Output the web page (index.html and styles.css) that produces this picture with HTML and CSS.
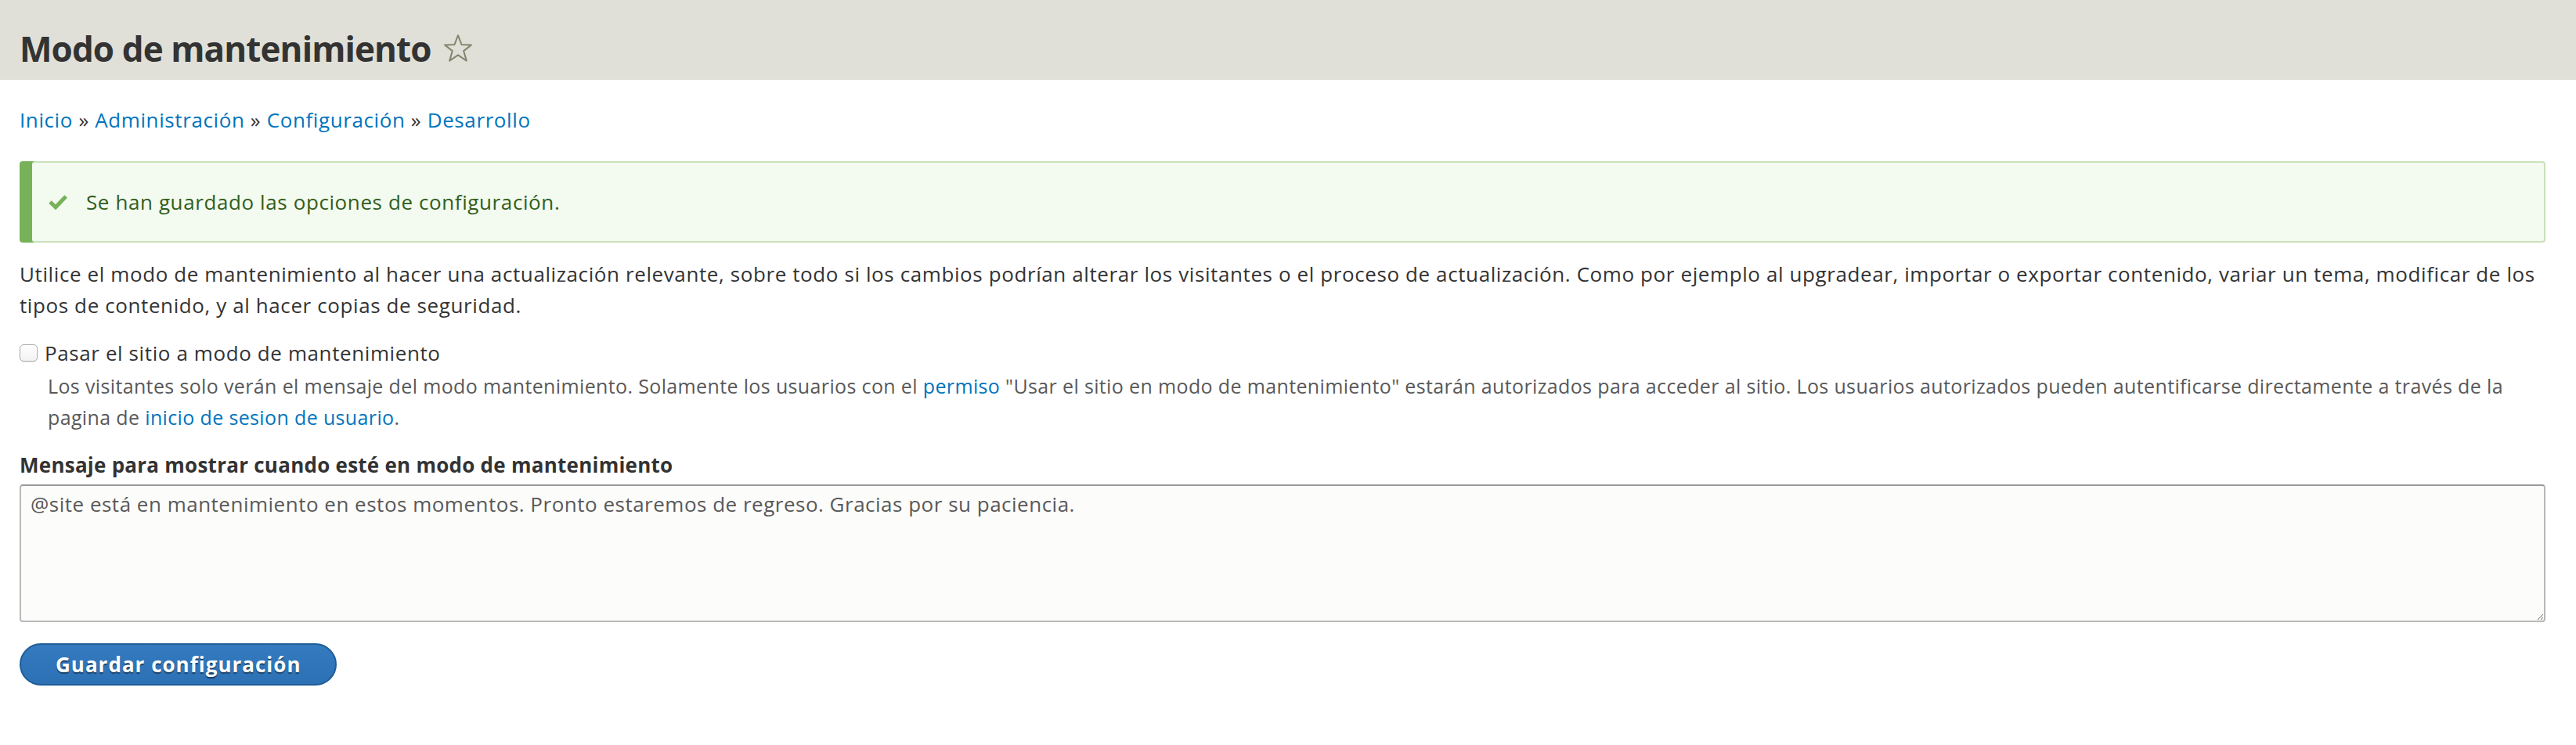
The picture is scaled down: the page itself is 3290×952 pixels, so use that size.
FILE: index.html
```html
<!DOCTYPE html>
<html lang="es">

<head>
	<title>Modo de mantenimiento</title>
	<meta charset="utf-8">
	<meta name="viewport" content="width=device-width, initial-scale=1.0">
	<link rel="stylesheet" href="styles.css">
</head>

<body>

	<header class="page-header">
		<h1 class="page-title">Modo de mantenimiento
			<a href="#" class="shortcut" title="Añadir a los atajos"><svg class="star" viewBox="0 0 36 36" width="36" height="36">
				<path d="M18 1.2 L22.6 13.1 L35 13.4 L25.2 21.1 L28.8 33.6 L18 26.3 L7.2 33.6 L10.8 21.1 L1 13.4 L13.4 13.1 Z" fill="none" stroke="#85856f" stroke-width="2" stroke-linejoin="round" />
			</svg></a>
		</h1>
	</header>

	<div class="layout-container">

		<nav class="breadcrumb">
			<a href="#">Inicio</a> » <a href="#">Administración</a> » <a href="#">Configuración</a> » <a href="#">Desarrollo</a>
		</nav>

		<div class="messages messages-status" role="status">
			<svg class="check" viewBox="0 0 24 20" width="24" height="20">
				<path d="M2 10 L9 16.8 L22.2 3" fill="none" stroke="#77b259" stroke-width="5" />
			</svg>
			<span>Se han guardado las opciones de configuración.</span>
		</div>

		<p class="intro">Utilice el modo de mantenimiento al hacer una actualización relevante, sobre todo si los cambios podrían alterar los visitantes o el proceso de actualización. Como por ejemplo al upgradear, importar o exportar contenido, variar un tema, modificar de los tipos de contenido, y al hacer copias de seguridad.</p>

		<form class="config-form">
			<div class="form-item form-type-checkbox">
				<div class="checkbox-row">
					<input type="checkbox" id="edit-maintenance-mode" class="form-checkbox">
					<label for="edit-maintenance-mode" class="option">Pasar el sitio a modo de mantenimiento</label>
				</div>
				<div class="description">Los visitantes solo verán el mensaje del modo mantenimiento. Solamente los usuarios con el <a href="#">permiso</a> "Usar el sitio en modo de mantenimiento" estarán autorizados para acceder al sitio. Los usuarios autorizados pueden autentificarse directamente a través de la pagina de <a href="#">inicio de sesion de usuario</a>.</div>
			</div>

			<div class="form-item form-type-textarea">
				<label for="edit-maintenance-mode-message" class="form-label">Mensaje para mostrar cuando esté en modo de mantenimiento</label>
				<textarea id="edit-maintenance-mode-message" class="form-textarea">@site está en mantenimiento en estos momentos. Pronto estaremos de regreso. Gracias por su paciencia.</textarea>
			</div>

			<div class="form-actions">
				<button type="submit" class="button button-primary">Guardar configuración</button>
			</div>
		</form>

	</div>

</body>

</html>
```

FILE: styles.css
```css
*,
*:before,
*:after {
	box-sizing: border-box;
}

/**
 * Base
 */
body {
	margin: 0;
	background: #ffffff;
	color: #333333;
	font-family: "Open Sans", "DejaVu Sans", sans-serif;
	font-size: 26px;
	line-height: 40px;
	letter-spacing: 0.6px;
}

a {
	color: #0074bd;
	text-decoration: none;
}

/**
 * Header
 */
.page-header {
	background-color: #e0e0d8;
	height: 102px;
	padding: 37px 39px 0 25px;
}

.page-title {
	margin: 0;
	font-size: 44px;
	line-height: 50px;
	font-weight: bold;
	letter-spacing: -0.9px;
	color: #333333;
}

.shortcut {
	display: inline-block;
	margin-left: 6px;
}

.star {
	display: inline-block;
	vertical-align: -1px;
}

/**
 * Content
 */
.layout-container {
	padding: 0 39px 0 25px;
}

.breadcrumb {
	margin-top: 31px;
}

.messages {
	display: flex;
	align-items: flex-start;
	margin: 33px 0 0 16px;
	padding: 30px 40px 30px 21px;
	border: 2px solid #c9e1bd;
	border-left-width: 0;
	border-radius: 4px;
	box-shadow: -16px 0 0 #77b259;
}

.messages-status {
	background-color: #f3faef;
	color: #325e1c;
}

.check {
	flex: none;
	margin: 10px 24px 0 0;
}

.intro {
	margin: 20px 0 0;
}

/**
 * Form
 */
.form-type-checkbox {
	margin-top: 21px;
}

.checkbox-row {
	display: flex;
	align-items: center;
}

.form-checkbox {
	-webkit-appearance: none;
	appearance: none;
	width: 23px;
	height: 22px;
	margin: 0 9px 0 0;
	border: 1px solid #aaaaaa;
	border-radius: 5px;
	background: linear-gradient(#ffffff, #f2f2f2);
	box-shadow: 0 1px 1px rgba(0, 0, 0, 0.08);
}

.description {
	padding-left: 36px;
	margin-top: 2px;
	font-size: 25px;
	line-height: 40px;
	letter-spacing: 0.36px;
	color: #595959;
}

.form-type-textarea {
	margin-top: 21px;
}

.form-label {
	display: block;
	font-weight: bold;
	line-height: 40px;
	letter-spacing: 0.25px;
	margin-bottom: 5px;
}

.form-textarea {
	display: block;
	width: 100%;
	height: 176px;
	margin: 0;
	padding: 6px 12px;
	border: 2px solid #b8b8b8;
	border-top-color: #999999;
	border-radius: 4px;
	background: #fcfcfa;
	color: #595959;
	font-family: "Open Sans", "DejaVu Sans", sans-serif;
	font-size: 26px;
	line-height: 34px;
	letter-spacing: 0.5px;
	resize: vertical;
}

.form-actions {
	margin-top: 27px;
}

.button {
	display: inline-block;
	height: 54px;
	padding: 0 44px;
	border: 2px solid #1f5d97;
	border-radius: 27px;
	font-family: "Open Sans", "DejaVu Sans", sans-serif;
	font-size: 26px;
	font-weight: bold;
	line-height: 50px;
	letter-spacing: 1px;
	cursor: pointer;
}

.button-primary {
	background: linear-gradient(#347abf, #2d71b5);
	color: #ffffff;
	text-shadow: 0 2px 1px rgba(0, 0, 0, 0.45);
}
```
